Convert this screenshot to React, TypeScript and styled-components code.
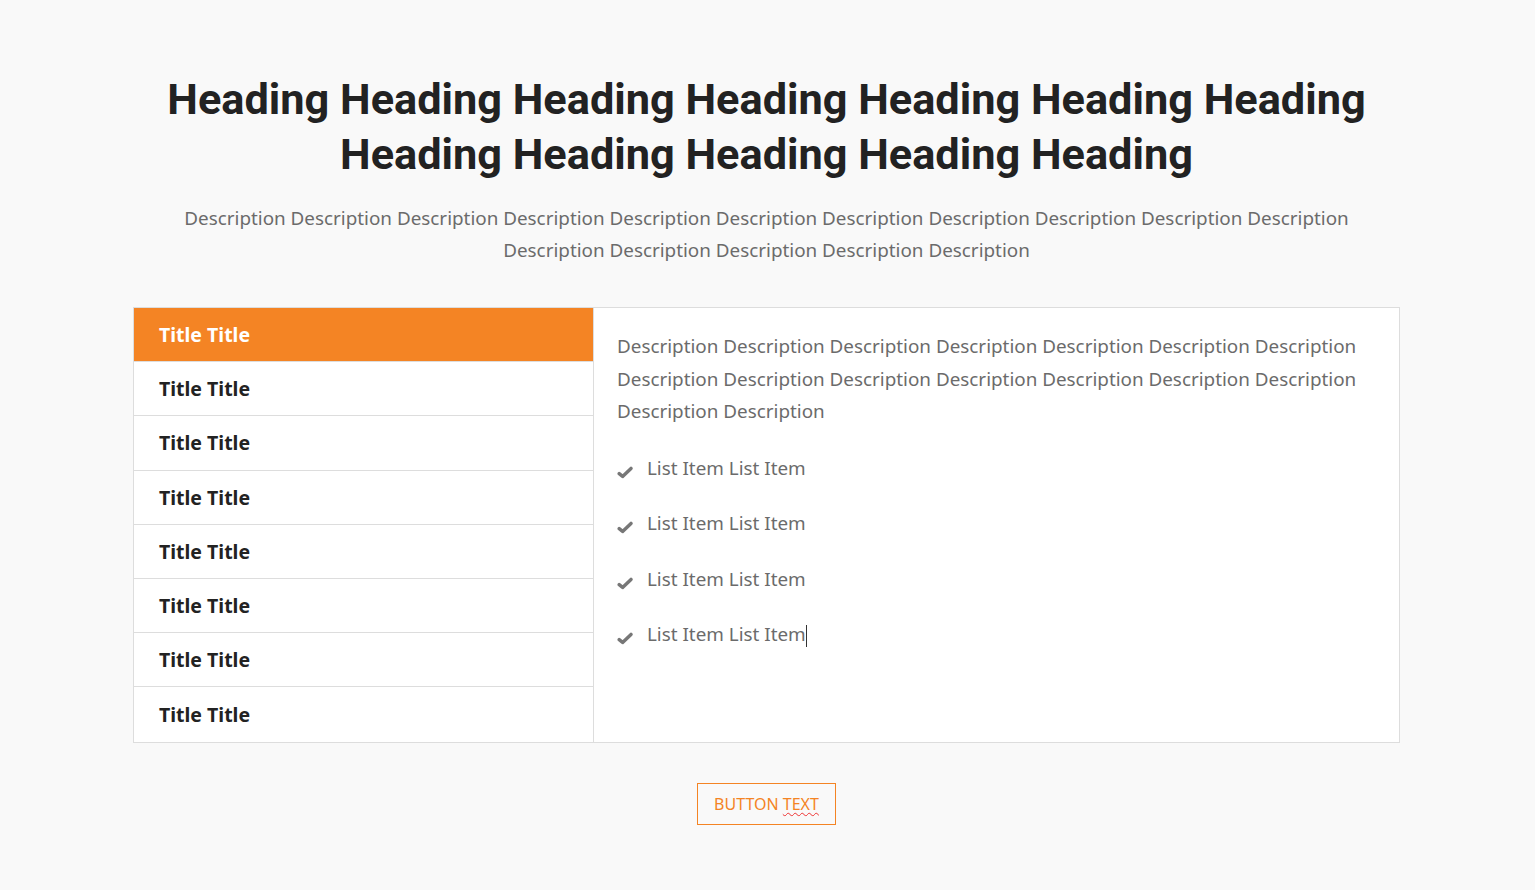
import { FC } from 'react';
import styled, { createGlobalStyle } from 'styled-components';

const GlobalStyle = createGlobalStyle`
    html, body {
        margin: 0;
        padding: 0;
        background: #f9f9f9;
    }
    body {
        font-family: "Noto Sans", "Open Sans", sans-serif;
    }
`;

const ORANGE = '#f48424';

const Page = styled.div`
    display: flex;
    flex-direction: column;
    align-items: center;
    padding: 72px 136px 64px 134px;
    min-height: 890px;
    box-sizing: border-box;
`;

const Heading = styled.h1`
    margin: 0;
    font-family: Roboto, "Liberation Sans", sans-serif;
    font-weight: 700;
    font-size: 43.3px;
    line-height: 55px;
    color: #222;
    text-align: center;
    max-width: 1230px;
`;

const Lead = styled.p`
    margin: 20px 0 0;
    font-size: 18.85px;
    line-height: 32px;
    color: #6b6b6b;
    text-align: center;
    max-width: 1180px;
`;

const Panel = styled.div`
    margin-top: 41px;
    width: 100%;
    display: grid;
    grid-template-columns: 460px 1fr;
    border: 1px solid #ddd;
    background: #fff;
`;

const Tabs = styled.ul`
    list-style: none;
    margin: 0;
    padding: 0;
    border-right: 1px solid #ddd;
`;

const Tab = styled.li<{ $active?: boolean }>`
    height: 54.2px;
    display: flex;
    align-items: center;
    padding-left: 25px;
    box-sizing: border-box;
    font-size: 19.5px;
    font-weight: 700;
    color: ${p => (p.$active ? '#fff' : '#222')};
    background: ${p => (p.$active ? ORANGE : '#fff')};
    border-bottom: 1px solid #ddd;
    &:last-child {
        border-bottom: none;
    }
`;

const Content = styled.div`
    padding: 22px 20px 24px 23px;
    color: #6b6b6b;
`;

const Text = styled.p`
    margin: 0;
    font-size: 18.85px;
    line-height: 32.5px;
`;

const Items = styled.ul`
    list-style: none;
    margin: 24px 0 0;
    padding: 0;
    display: flex;
    flex-direction: column;
    gap: 23.5px;
`;

const Item = styled.li`
    display: flex;
    align-items: center;
    gap: 14px;
    font-size: 18.85px;
    line-height: 32px;
`;

const Check = styled.svg`
    width: 16px;
    height: 16px;
    margin-top: 6px;
    flex-shrink: 0;
`;

const Caret = styled.span`
    display: inline-block;
    width: 1px;
    height: 22px;
    background: #333;
    vertical-align: middle;
`;

const Button = styled.button`
    margin-top: 40px;
    padding: 0 16px;
    height: 42px;
    border: 1px solid ${ORANGE};
    background: transparent;
    color: ${ORANGE};
    font-family: inherit;
    font-size: 16px;
    text-transform: uppercase;
`;

const Squiggle = styled.span`
    text-decoration: underline wavy #e33;
    text-decoration-thickness: 1px;
    text-underline-offset: 2px;
`;

const CheckIcon: FC = () => (
    <Check viewBox="0 0 16 16">
        <polyline
            points="2.2,10.6 5.6,13.4 14,5.4"
            fill="none"
            stroke="#777"
            strokeWidth="3.4"
            strokeLinecap="round"
            strokeLinejoin="round"
        />
    </Check>
);

const titles = Array.from({ length: 8 }, () => 'Title Title');
const items = Array.from({ length: 4 }, () => 'List Item List Item');

export default function App() {
    return (
        <>
            <GlobalStyle />
            <Page>
                <Heading>{Array(12).fill('Heading').join(' ')}</Heading>
                <Lead>{Array(16).fill('Description').join(' ')}</Lead>
                <Panel>
                    <Tabs>
                        {titles.map((t, i) => (
                            <Tab key={i} $active={i === 0}>{t}</Tab>
                        ))}
                    </Tabs>
                    <Content>
                        <Text>{Array(16).fill('Description').join(' ')}</Text>
                        <Items>
                            {items.map((t, i) => (
                                <Item key={i}>
                                    <CheckIcon />
                                    <span>
                                        {t}
                                        {i === items.length - 1 && <Caret />}
                                    </span>
                                </Item>
                            ))}
                        </Items>
                    </Content>
                </Panel>
                <Button>
                    Button <Squiggle>Text</Squiggle>
                </Button>
            </Page>
        </>
    );
}
